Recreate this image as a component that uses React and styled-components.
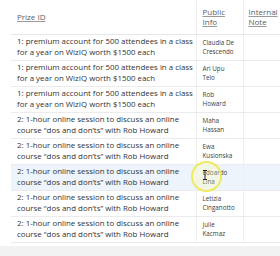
import React from "react";
import styled, { createGlobalStyle } from "styled-components";

const Global = createGlobalStyle`
  html, body { margin: 0; padding: 0; background: #f2f2f2; }
  body { font-family: "Open Sans", "Liberation Sans", sans-serif; }
`;

const Page = styled.div`
  position: relative;
  width: 280px;
  height: 246px;
  background: #ffffff;
  padding-left: 11px;
  box-sizing: border-box;
  overflow: hidden;
`;

const Table = styled.table`
  border-collapse: collapse;
  table-layout: fixed;
  width: 300px;
`;

const HeadCell = styled.th`
  height: 34px;
  padding: 0 0 0 ${(p) => p.$pad || 6}px;
  text-align: left;
  vertical-align: middle;
  font-weight: 400;
  font-size: 8px;
  line-height: 10px;
  color: #5e5e5e;
  text-decoration: underline;
  text-decoration-color: #9a9a9a;
  text-underline-offset: 1px;
  border-bottom: 1px solid #e6e6e6;
  border-left: ${(p) => (p.$first ? "none" : "1px solid #efefef")};
  box-sizing: border-box;
`;

const Row = styled.tr`
  background: ${(p) => (p.$active ? "#edf4fb" : "#ffffff")};
`;

const PrizeCell = styled.td`
  height: 26px;
  padding: 0 0 0 6px;
  vertical-align: middle;
  font-size: 7.9px;
  line-height: 11px;
  color: #333333;
  white-space: nowrap;
  border-bottom: 1px solid #ebebeb;
  box-sizing: border-box;
`;

const NameCell = styled.td`
  padding: 0 0 0 6px;
  vertical-align: middle;
  font-size: 6.3px;
  line-height: 9.5px;
  color: #404040;
  white-space: nowrap;
  border-bottom: 1px solid #ebebeb;
  border-left: 1px solid #efefef;
  box-sizing: border-box;
`;

const NoteCell = styled.td`
  border-bottom: 1px solid #ebebeb;
  border-left: 1px solid #efefef;
`;

const Highlight = styled.div`
  position: absolute;
  left: 191px;
  top: 161px;
  width: 31px;
  height: 31px;
  border-radius: 50%;
  box-sizing: border-box;
  border: 2px solid rgba(238, 232, 80, 0.9);
  background: rgba(255, 252, 170, 0.28);
  pointer-events: none;
`;

const Beam = styled.svg`
  position: absolute;
  left: 202px;
  top: 170px;
  pointer-events: none;
`;

const P1 = ["1: premium account for 500 attendees in a class", "for a year on WizIQ worth $1500 each"];
const P2 = ["2: 1-hour online session to discuss an online", "course \u201cdos and don\u2019ts\u201d with Rob Howard"];

const rows = [
  { prize: P1, name: ["Claudia De", "Crescendo"] },
  { prize: P1, name: ["Ari Upu", "Telo"] },
  { prize: P1, name: ["Rob", "Howard"] },
  { prize: P2, name: ["Maha", "Hassan"] },
  { prize: P2, name: ["Ewa", "Kusionska"] },
  { prize: P2, name: ["Edoardo", "Lina"], active: true },
  { prize: P2, name: ["Letizia", "Cinganotto"] },
  { prize: P2, name: ["Julie", "Kacmaz"] },
];

const Lines = ({ lines }) => (
  <>
    {lines[0]}
    <br />
    {lines[1]}
  </>
);

export default function App() {
  return (
    <>
      <Global />
      <Page>
        <Table>
          <colgroup>
            <col style={{ width: 185 }} />
            <col style={{ width: 47 }} />
            <col style={{ width: 68 }} />
          </colgroup>
          <thead>
            <tr>
              <HeadCell $first>Prize ID</HeadCell>
              <HeadCell>
                Public
                <br />
                Info
              </HeadCell>
              <HeadCell $pad={5}>
                Internal
                <br />
                Note
              </HeadCell>
            </tr>
          </thead>
          <tbody>
            {rows.map((r, i) => (
              <Row key={i} $active={r.active}>
                <PrizeCell>
                  <Lines lines={r.prize} />
                </PrizeCell>
                <NameCell>
                  <Lines lines={r.name} />
                </NameCell>
                <NoteCell />
              </Row>
            ))}
          </tbody>
        </Table>
        <Highlight />
        <Beam width="6" height="10" viewBox="0 0 6 10">
          <path d="M1 0.5h4M3 0.5v9M1 9.5h4" stroke="#222" strokeWidth="1" fill="none" />
        </Beam>
      </Page>
    </>
  );
}
